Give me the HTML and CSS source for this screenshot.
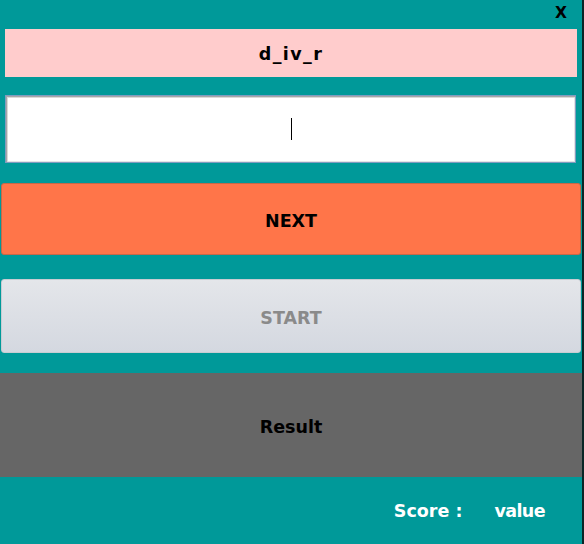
FILE: index.html
```html
<!DOCTYPE html>
<html>
<head>
<meta charset="utf-8">
<link rel="stylesheet" href="styles.css">
</head>
<body>
<div class="app">
  <div class="topbar"><span class="close">X</span></div>
  <div class="word">d_iv_r</div>
  <div class="answer"><span class="caret"></span></div>
  <button class="btn btn-next">NEXT</button>
  <button class="btn btn-start">START</button>
  <div class="result">Result</div>
  <div class="score">
    <span class="score-label">Score :</span>
    <span class="score-value">value</span>
  </div>
</div>
</body>
</html>
```
FILE: styles.css
```css
html, body {
  margin: 0;
  padding: 0;
  height: 100%;
  background: #0a2626;
}
body {
  font-family: "DejaVu Sans", Verdana, sans-serif;
  font-weight: bold;
  overflow: hidden;
}
.app {
  width: 582px;
  height: 544px;
  background: #009999;
  display: flex;
  flex-direction: column;
}
.topbar {
  height: 29px;
  display: flex;
  justify-content: flex-end;
  align-items: flex-start;
  padding-right: 15px;
  box-sizing: border-box;
}
.close {
  font-size: 15.5px;
  line-height: 15px;
  margin-top: 6px;
  color: #000;
}
.word {
  margin: 0 5px 0 5px;
  height: 48px;
  box-sizing: border-box;
  padding-top: 2px;
  background: #ffcccc;
  display: flex;
  align-items: center;
  justify-content: center;
  font-size: 17.5px;
  letter-spacing: 1.4px;
  color: #000;
}
.answer {
  margin: 18px 6px 0 5px;
  height: 68px;
  box-sizing: border-box;
  background: #fff;
  border: 1px solid #7f9cc0;
  box-shadow: inset 1px 1px 0 #a6a6a6, inset 2px 2px 0 #d9d9d9, inset -1px -1px 0 #e4e4e4;
  display: flex;
  align-items: center;
  justify-content: center;
}
.caret {
  width: 1px;
  height: 22px;
  background: #000;
  margin-left: 1px;
}
.btn {
  font-family: "DejaVu Sans", Verdana, sans-serif;
  font-weight: bold;
  font-size: 17.5px;
  margin: 0 1px 0 1px;
  border-radius: 3px;
  padding: 4px 0 0 0;
  box-sizing: border-box;
  display: flex;
  align-items: center;
  justify-content: center;
}
.btn-next {
  margin-top: 20px;
  height: 72px;
  background: #ff7549;
  border: 1px solid #c76848;
  color: #000;
}
.btn-start {
  margin-top: 24px;
  height: 74px;
  background: linear-gradient(#e4e6ea, #d4d8e0);
  border: 1px solid #c8ccd2;
  color: #8a8a8a;
}
.result {
  margin-top: 20px;
  height: 104px;
  box-sizing: border-box;
  padding-top: 4px;
  background: #666666;
  display: flex;
  align-items: center;
  justify-content: center;
  font-size: 17.5px;
  color: #000;
}
.score {
  flex: 1;
  display: flex;
  align-items: center;
  justify-content: flex-end;
  padding-right: 37px;
  gap: 32px;
  font-size: 17.5px;
  color: #fff;
}
.score-value {
  letter-spacing: -0.6px;
}
```
